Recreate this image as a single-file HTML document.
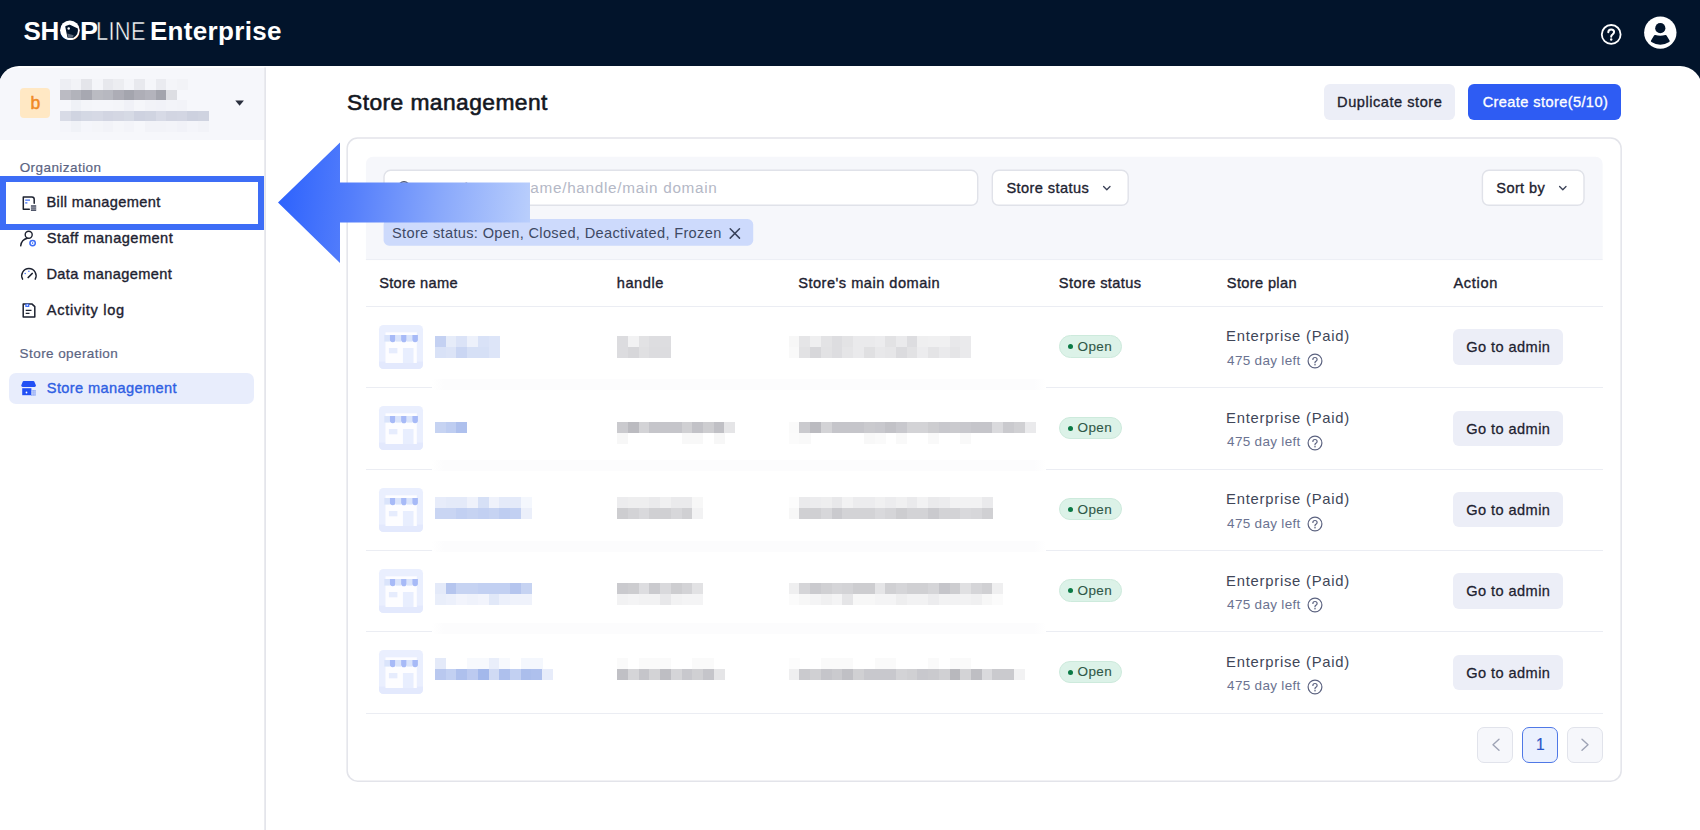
<!DOCTYPE html>
<html lang="en">
<head>
<meta charset="utf-8">
<title>Store management</title>
<style>
*{box-sizing:border-box;margin:0;padding:0}
html,body{width:1700px;height:830px;overflow:hidden}
body{background:#02142b;font-family:"Liberation Sans",sans-serif;color:#1d2230;position:relative}
.a{position:absolute}
.t{position:absolute;white-space:nowrap;line-height:1}
svg{position:absolute;overflow:visible}
.btn{position:absolute;background:#eceef7;border-radius:6px}
.inp{position:absolute;background:#fff;border:1px solid #dfe1ea;border-radius:7px}
.hl{position:absolute;height:1px;background:#ebedf3}
.badge{position:absolute;left:1058.5px;width:63px;height:22.6px;border-radius:12px;background:#dcf2e8;border:1px solid #cdeadc}
.dot{position:absolute;left:1068.2px;width:5px;height:5px;border-radius:50%;background:#0a7a45}
.pg{position:absolute;top:727px;width:36px;height:36px;border-radius:7px;background:#f6f7fb;border:1px solid #e1e3eb}
</style>
</head>
<body>
<!-- app shell -->
<div class="a" id="shell" style="left:-1px;top:66px;width:1703px;height:764px;background:#fff;border-radius:20px 22px 0 0"></div>
<div class="a" id="org" style="left:-1px;top:68px;width:265px;height:72px;background:#f6f7fb;border-radius:18px 0 0 0"></div>
<svg id="sideborder" style="left:260px;top:66px" width="10" height="764" viewBox="260 66 10 764"><rect x="264.300" y="67.500" width="1.600" height="763" fill="#e2e3e9"/></svg>
<div class="a" id="avatar" style="left:20px;top:88px;width:30px;height:30px;border-radius:4px;background:#ffe8c4"></div>
<svg id="caret" style="left:234.5px;top:100px" width="10" height="7" viewBox="0 0 10 7"><path d="M0.3 0.5h8.6L4.6 5.8z" fill="#2a2f3d"/></svg>

<!-- top bar icons -->
<svg id="help" style="left:1600px;top:23px" width="22" height="22" viewBox="0 0 22 22"><circle cx="11.200" cy="11.400" r="9.400" fill="none" stroke="#fff" stroke-width="1.800"/><path d="M8.300 9.300c0-1.700 1.300-2.800 2.900-2.800s2.900 1.100 2.900 2.600c0 1.300-.8 1.900-1.700 2.500-.8.500-1.200 1-1.200 1.900v.3" fill="none" stroke="#fff" stroke-width="2" stroke-linecap="round"/><circle cx="11.200" cy="16.500" r="1.200" fill="#fff"/></svg>
<svg id="user" style="left:1644px;top:16px" width="33" height="34" viewBox="1644 16 33 34"><circle cx="1660.300" cy="32.600" r="16.200" fill="#fff"/><circle cx="1660.300" cy="28.200" r="5.100" fill="#02142b"/><path d="M1655 36q5.300 1.700 10.600 0l3 5q-8.300 5.200-16.600 0z" fill="#02142b" stroke="#02142b" stroke-width="2.200" stroke-linejoin="round"/></svg>

<!-- sidebar -->
<div class="a" id="activebg" style="left:8.8px;top:373px;width:245px;height:31px;border-radius:7px;background:#e8edfc"></div>
<svg id="ic1" style="left:21px;top:195px" width="17" height="17" viewBox="0 0 17 17"><path d="M13.200 8.300V4.200a2.300 2.300 0 0 0-2.300-2.300H2.300v12.300h6" fill="none" stroke="#1d2230" stroke-width="1.500" stroke-linejoin="round" stroke-linecap="round"/><path d="M4.200 5.100h4.800M4.200 7.800h2.200" stroke="#3d6df6" stroke-width="1.300"/><rect x="9.900" y="10.200" width="5.300" height="5.800" fill="#50566a"/><path d="M9.900 12.100h5.300M9.900 14.100h5.300" stroke="#fff" stroke-width="0.500"/></svg>
<svg id="ic2" style="left:19px;top:229px" width="19" height="19" viewBox="0 0 19 19"><circle cx="9.700" cy="5.800" r="3.500" fill="none" stroke="#1d2230" stroke-width="1.400"/><path d="M1.700 16.800c.5-4 3-6.700 6.600-7.500" fill="none" stroke="#1d2230" stroke-width="1.400" stroke-linecap="round"/><circle cx="13.600" cy="14.100" r="2.700" fill="#fff" stroke="#3d6df6" stroke-width="1.500"/><circle cx="13.600" cy="14.100" r="0.800" fill="#3d6df6"/></svg>
<svg id="ic3" style="left:20px;top:266px" width="18" height="16" viewBox="0 0 18 16"><path d="M2.600 13.200a7.200 7.200 0 1 1 12.600 0" fill="none" stroke="#1d2230" stroke-width="1.400" stroke-linecap="round"/><path d="M8.200 11.500l4-4" stroke="#1d2230" stroke-width="1.700" stroke-linecap="round"/><circle cx="5.200" cy="7.600" r="0.750" fill="#3d6df6"/><circle cx="8.900" cy="5.200" r="0.750" fill="#3d6df6"/></svg>
<svg id="ic4" style="left:21px;top:302px" width="16" height="17" viewBox="0 0 16 17"><path d="M2.200 2.100h8.900l2.700 2.500v10.300H2.200z" fill="none" stroke="#1d2230" stroke-width="1.500" stroke-linejoin="round"/><path d="M4.300 1.700h4v3.300h-4z" fill="#3d6df6"/><path d="M5.600 2.500h1.400v1.300h-1.400z" fill="#fff"/><path d="M4.700 8.400h5.800M4.700 11.400h3.800" stroke="#1d2230" stroke-width="1.400"/></svg>
<svg id="ic5" style="left:21px;top:380px" width="16" height="17" viewBox="0 0 16 17"><path d="M2.700 0.900h9.700a1 1 0 0 1 .9.500l1.400 3.300a1.500 1.500 0 0 1-1.400 2.300H1.900A1.500 1.500 0 0 1 .5 4.700l1.300-3.300a1 1 0 0 1 .9-.5z" fill="#2250f4"/><path d="M1.200 8.200h9.200v7H1.200z" fill="#2250f4"/><circle cx="5.500" cy="12.500" r="0.900" fill="#fff"/><path d="M10 10h4.700v5.700H10z" fill="#8fa8f6"/><path d="M10 11.900h4.700M10 13.800h4.700M11.600 10v5.700M13.200 10v5.700" stroke="#e8edfc" stroke-width="0.350"/></svg>
<div class="a" id="highlight" style="left:0;top:176px;width:264px;height:54px;border:6px solid #3d6df6"></div>

<!-- header buttons -->
<div class="btn" style="left:1324px;top:84px;width:131px;height:35.800px"></div>
<div class="btn" style="left:1468.400px;top:84px;width:152.800px;height:35.800px;background:#2e5cf3"></div>

<!-- card -->
<svg id="chrome" style="left:0;top:0" width="1700" height="830" viewBox="0 0 1700 830">
<rect x="347.150" y="138.050" width="1274" height="643.100" rx="10.500" fill="#fff" stroke="#e3e4ea" stroke-width="1.500"/>
<path d="M365.900 260V163.800a7 7 0 0 1 7-7H1595.600a7 7 0 0 1 7 7V260z" fill="#f6f7fb"/>
<path d="M365.900 259.600H1602.600" stroke="#eceef4" stroke-width="1"/>
<g fill="#fff" stroke="#e0e2e9" stroke-width="1.400">
<rect x="384" y="170.300" width="593.700" height="35" rx="6.500"/>
<rect x="992.300" y="170.300" width="135.900" height="35" rx="6.500"/>
<rect x="1482.400" y="170.300" width="101.600" height="35" rx="6.500"/>
</g>
</svg>
<svg id="sicon" style="left:397px;top:180px" width="16" height="16" viewBox="0 0 16 16"><circle cx="7" cy="7" r="5.300" fill="none" stroke="#4a5066" stroke-width="1.500"/><path d="M11 11l3.500 3.500" stroke="#4a5066" stroke-width="1.500" stroke-linecap="round"/></svg>
<svg style="left:1101.500px;top:184.500px" width="10" height="7" viewBox="0 0 10 7"><path d="M1.600 1.500l3.200 3.300 3.200-3.300" fill="none" stroke="#3a4056" stroke-width="1.300" stroke-linecap="round" stroke-linejoin="round"/></svg>
<svg style="left:1558.300px;top:184.500px" width="10" height="7" viewBox="0 0 10 7"><path d="M1.600 1.500l3.200 3.300 3.200-3.300" fill="none" stroke="#3a4056" stroke-width="1.300" stroke-linecap="round" stroke-linejoin="round"/></svg>
<svg id="tagbg" style="left:380px;top:215px" width="380" height="36" viewBox="380 215 380 36"><rect x="383.600" y="219.100" width="369.600" height="26.600" rx="5.500" fill="#cddafc"/></svg>
<svg id="tagx" style="left:729px;top:227.500px" width="12" height="11" viewBox="0 0 12 11"><path d="M1.200 0.800l9.300 9.300M10.500 0.800L1.200 10.100" stroke="#39435c" stroke-width="1.500" stroke-linecap="round"/></svg>

<!-- table lines -->
<div class="hl" style="left:366px;top:305.700px;width:1237px"></div>
<div class="hl" style="left:366px;top:387.1px;width:66px"></div>
<div class="hl" style="left:1046px;top:387.1px;width:557px"></div>
<div class="a" style="left:432px;top:378.6px;width:614px;height:11px;background:linear-gradient(90deg,rgba(252,252,253,0),#fcfcfd 12px,#fcfcfd 602px,rgba(252,252,253,0))"></div>
<svg style="left:379.4px;top:324.7px" width="44" height="44" viewBox="0 0 44 44"><rect width="44" height="44" rx="4.500" fill="#eaeffe"/><path d="M0 36.500h44v3a4.500 4.500 0 0 1-4.500 4.500h-35A4.500 4.500 0 0 1 0 39.500z" fill="#e3e9fd"/><rect x="6.500" y="7.300" width="31.300" height="30.700" fill="#fdfdff"/><rect x="9.900" y="23" width="8.500" height="5.300" fill="#e6ecfd"/><rect x="23.900" y="23" width="10.600" height="15" fill="#e8eefe"/><g><rect x="5.300" y="10" width="5.600" height="6.600" fill="#dae4fb"/><path d="M10.900 10h5.600v4.400a2.800 2.800 0 0 1-5.600 0z" fill="#a7baf7"/><rect x="16.500" y="10" width="5.600" height="6.600" fill="#dae4fb"/><path d="M22.100 10h5.600v4.400a2.800 2.800 0 0 1-5.600 0z" fill="#a7baf7"/><rect x="27.700" y="10" width="5.600" height="6.600" fill="#dae4fb"/><path d="M33.300 10h5.600v4.400a2.800 2.800 0 0 1-5.600 0z" fill="#a7baf7"/></g></svg>
<div class="badge" style="top:335.1px"></div>
<div class="dot" style="top:344.1px"></div>
<svg style="left:1306.6px;top:353.1px" width="16" height="16" viewBox="0 0 16 16"><circle cx="8" cy="8" r="6.900" fill="none" stroke="#5c6380" stroke-width="1.200"/><path d="M5.900 6.500c0-1.200 1-2 2.100-2s2.100.8 2.100 1.900c0 .9-.6 1.400-1.200 1.800-.6.400-.9.700-.9 1.400v.2" fill="none" stroke="#5c6380" stroke-width="1.200" stroke-linecap="round"/><circle cx="8" cy="11.700" r="0.800" fill="#5c6380"/></svg>
<div class="btn" style="left:1453.400px;top:329.2px;width:110px;height:35.400px"></div>
<div class="hl" style="left:366px;top:468.5px;width:66px"></div>
<div class="hl" style="left:1046px;top:468.5px;width:557px"></div>
<div class="a" style="left:432px;top:460.0px;width:614px;height:11px;background:linear-gradient(90deg,rgba(252,252,253,0),#fcfcfd 12px,#fcfcfd 602px,rgba(252,252,253,0))"></div>
<svg style="left:379.4px;top:406.1px" width="44" height="44" viewBox="0 0 44 44"><rect width="44" height="44" rx="4.500" fill="#eaeffe"/><path d="M0 36.500h44v3a4.500 4.500 0 0 1-4.500 4.500h-35A4.500 4.500 0 0 1 0 39.500z" fill="#e3e9fd"/><rect x="6.500" y="7.300" width="31.300" height="30.700" fill="#fdfdff"/><rect x="9.900" y="23" width="8.500" height="5.300" fill="#e6ecfd"/><rect x="23.900" y="23" width="10.600" height="15" fill="#e8eefe"/><g><rect x="5.300" y="10" width="5.600" height="6.600" fill="#dae4fb"/><path d="M10.900 10h5.600v4.400a2.800 2.800 0 0 1-5.600 0z" fill="#a7baf7"/><rect x="16.500" y="10" width="5.600" height="6.600" fill="#dae4fb"/><path d="M22.100 10h5.600v4.400a2.800 2.800 0 0 1-5.600 0z" fill="#a7baf7"/><rect x="27.700" y="10" width="5.600" height="6.600" fill="#dae4fb"/><path d="M33.300 10h5.600v4.400a2.800 2.800 0 0 1-5.600 0z" fill="#a7baf7"/></g></svg>
<div class="badge" style="top:416.5px"></div>
<div class="dot" style="top:425.5px"></div>
<svg style="left:1306.6px;top:434.5px" width="16" height="16" viewBox="0 0 16 16"><circle cx="8" cy="8" r="6.900" fill="none" stroke="#5c6380" stroke-width="1.200"/><path d="M5.900 6.500c0-1.200 1-2 2.100-2s2.100.8 2.100 1.900c0 .9-.6 1.400-1.200 1.800-.6.400-.9.700-.9 1.400v.2" fill="none" stroke="#5c6380" stroke-width="1.200" stroke-linecap="round"/><circle cx="8" cy="11.700" r="0.800" fill="#5c6380"/></svg>
<div class="btn" style="left:1453.400px;top:410.6px;width:110px;height:35.400px"></div>
<div class="hl" style="left:366px;top:549.9px;width:66px"></div>
<div class="hl" style="left:1046px;top:549.9px;width:557px"></div>
<div class="a" style="left:432px;top:541.4px;width:614px;height:11px;background:linear-gradient(90deg,rgba(252,252,253,0),#fcfcfd 12px,#fcfcfd 602px,rgba(252,252,253,0))"></div>
<svg style="left:379.4px;top:487.5px" width="44" height="44" viewBox="0 0 44 44"><rect width="44" height="44" rx="4.500" fill="#eaeffe"/><path d="M0 36.500h44v3a4.500 4.500 0 0 1-4.500 4.500h-35A4.500 4.500 0 0 1 0 39.500z" fill="#e3e9fd"/><rect x="6.500" y="7.300" width="31.300" height="30.700" fill="#fdfdff"/><rect x="9.900" y="23" width="8.500" height="5.300" fill="#e6ecfd"/><rect x="23.900" y="23" width="10.600" height="15" fill="#e8eefe"/><g><rect x="5.300" y="10" width="5.600" height="6.600" fill="#dae4fb"/><path d="M10.900 10h5.600v4.400a2.800 2.800 0 0 1-5.600 0z" fill="#a7baf7"/><rect x="16.500" y="10" width="5.600" height="6.600" fill="#dae4fb"/><path d="M22.100 10h5.600v4.400a2.800 2.800 0 0 1-5.600 0z" fill="#a7baf7"/><rect x="27.700" y="10" width="5.600" height="6.600" fill="#dae4fb"/><path d="M33.300 10h5.600v4.400a2.800 2.800 0 0 1-5.600 0z" fill="#a7baf7"/></g></svg>
<div class="badge" style="top:497.9px"></div>
<div class="dot" style="top:506.9px"></div>
<svg style="left:1306.6px;top:515.9px" width="16" height="16" viewBox="0 0 16 16"><circle cx="8" cy="8" r="6.900" fill="none" stroke="#5c6380" stroke-width="1.200"/><path d="M5.900 6.500c0-1.200 1-2 2.100-2s2.100.8 2.100 1.900c0 .9-.6 1.400-1.200 1.800-.6.400-.9.700-.9 1.400v.2" fill="none" stroke="#5c6380" stroke-width="1.200" stroke-linecap="round"/><circle cx="8" cy="11.700" r="0.800" fill="#5c6380"/></svg>
<div class="btn" style="left:1453.400px;top:492.0px;width:110px;height:35.400px"></div>
<div class="hl" style="left:366px;top:631.3px;width:66px"></div>
<div class="hl" style="left:1046px;top:631.3px;width:557px"></div>
<div class="a" style="left:432px;top:622.8px;width:614px;height:11px;background:linear-gradient(90deg,rgba(252,252,253,0),#fcfcfd 12px,#fcfcfd 602px,rgba(252,252,253,0))"></div>
<svg style="left:379.4px;top:568.9px" width="44" height="44" viewBox="0 0 44 44"><rect width="44" height="44" rx="4.500" fill="#eaeffe"/><path d="M0 36.500h44v3a4.500 4.500 0 0 1-4.500 4.500h-35A4.500 4.500 0 0 1 0 39.500z" fill="#e3e9fd"/><rect x="6.500" y="7.300" width="31.300" height="30.700" fill="#fdfdff"/><rect x="9.900" y="23" width="8.500" height="5.300" fill="#e6ecfd"/><rect x="23.900" y="23" width="10.600" height="15" fill="#e8eefe"/><g><rect x="5.300" y="10" width="5.600" height="6.600" fill="#dae4fb"/><path d="M10.900 10h5.600v4.400a2.800 2.800 0 0 1-5.600 0z" fill="#a7baf7"/><rect x="16.500" y="10" width="5.600" height="6.600" fill="#dae4fb"/><path d="M22.100 10h5.600v4.400a2.800 2.800 0 0 1-5.600 0z" fill="#a7baf7"/><rect x="27.700" y="10" width="5.600" height="6.600" fill="#dae4fb"/><path d="M33.300 10h5.600v4.400a2.800 2.800 0 0 1-5.600 0z" fill="#a7baf7"/></g></svg>
<div class="badge" style="top:579.3px"></div>
<div class="dot" style="top:588.3px"></div>
<svg style="left:1306.6px;top:597.3px" width="16" height="16" viewBox="0 0 16 16"><circle cx="8" cy="8" r="6.900" fill="none" stroke="#5c6380" stroke-width="1.200"/><path d="M5.900 6.500c0-1.200 1-2 2.100-2s2.100.8 2.100 1.900c0 .9-.6 1.400-1.200 1.800-.6.400-.9.700-.9 1.400v.2" fill="none" stroke="#5c6380" stroke-width="1.200" stroke-linecap="round"/><circle cx="8" cy="11.700" r="0.800" fill="#5c6380"/></svg>
<div class="btn" style="left:1453.400px;top:573.4px;width:110px;height:35.400px"></div>
<div class="hl" style="left:366px;top:712.7px;width:1237px"></div>
<svg style="left:379.4px;top:650.3px" width="44" height="44" viewBox="0 0 44 44"><rect width="44" height="44" rx="4.500" fill="#eaeffe"/><path d="M0 36.500h44v3a4.500 4.500 0 0 1-4.500 4.500h-35A4.500 4.500 0 0 1 0 39.500z" fill="#e3e9fd"/><rect x="6.500" y="7.300" width="31.300" height="30.700" fill="#fdfdff"/><rect x="9.900" y="23" width="8.500" height="5.300" fill="#e6ecfd"/><rect x="23.900" y="23" width="10.600" height="15" fill="#e8eefe"/><g><rect x="5.300" y="10" width="5.600" height="6.600" fill="#dae4fb"/><path d="M10.900 10h5.600v4.400a2.800 2.800 0 0 1-5.600 0z" fill="#a7baf7"/><rect x="16.500" y="10" width="5.600" height="6.600" fill="#dae4fb"/><path d="M22.100 10h5.600v4.400a2.800 2.800 0 0 1-5.600 0z" fill="#a7baf7"/><rect x="27.700" y="10" width="5.600" height="6.600" fill="#dae4fb"/><path d="M33.300 10h5.600v4.400a2.800 2.800 0 0 1-5.600 0z" fill="#a7baf7"/></g></svg>
<div class="badge" style="top:660.7px"></div>
<div class="dot" style="top:669.7px"></div>
<svg style="left:1306.6px;top:678.7px" width="16" height="16" viewBox="0 0 16 16"><circle cx="8" cy="8" r="6.900" fill="none" stroke="#5c6380" stroke-width="1.200"/><path d="M5.900 6.500c0-1.200 1-2 2.100-2s2.100.8 2.100 1.900c0 .9-.6 1.400-1.200 1.800-.6.400-.9.700-.9 1.400v.2" fill="none" stroke="#5c6380" stroke-width="1.200" stroke-linecap="round"/><circle cx="8" cy="11.700" r="0.800" fill="#5c6380"/></svg>
<div class="btn" style="left:1453.400px;top:654.8px;width:110px;height:35.400px"></div>

<!-- pagination -->
<div class="pg" style="left:1477.200px"></div>
<div class="pg" style="left:1521.800px;background:#ebf1fe;border:1.500px solid #4f78e6"></div>
<div class="pg" style="left:1566.600px"></div>
<svg style="left:1490.500px;top:738px" width="10" height="14" viewBox="0 0 10 14"><path d="M8 1.300L2 6.800l6 5.500" fill="none" stroke="#9ea3b5" stroke-width="1.400" stroke-linecap="round" stroke-linejoin="round"/></svg>
<svg style="left:1580px;top:738px" width="10" height="14" viewBox="0 0 10 14"><path d="M2 1.300l6 5.500-6 5.500" fill="none" stroke="#9ea3b5" stroke-width="1.400" stroke-linecap="round" stroke-linejoin="round"/></svg>

<svg id="mosaic" style="left:0;top:0" width="1700" height="830" viewBox="0 0 1700 830" shape-rendering="crispEdges"><rect x="435.00" y="336.40" width="11.02" height="11.02" fill="#c4d1f2"/><rect x="445.72" y="336.40" width="11.02" height="11.02" fill="#e6ecf9"/><rect x="456.44" y="336.40" width="11.02" height="11.02" fill="#dbe3f7"/><rect x="467.16" y="336.40" width="11.02" height="11.02" fill="#edf1fb"/><rect x="477.88" y="336.40" width="11.02" height="11.02" fill="#d9e2f7"/><rect x="488.60" y="336.40" width="11.02" height="11.02" fill="#dde5f8"/><rect x="435.00" y="347.12" width="11.02" height="11.02" fill="#d9e2f7"/><rect x="445.72" y="347.12" width="11.02" height="11.02" fill="#dce4f7"/><rect x="456.44" y="347.12" width="11.02" height="11.02" fill="#cad6f3"/><rect x="467.16" y="347.12" width="11.02" height="11.02" fill="#d6e0f6"/><rect x="477.88" y="347.12" width="11.02" height="11.02" fill="#d6e0f6"/><rect x="488.60" y="347.12" width="11.02" height="11.02" fill="#dde5f8"/><rect x="617.24" y="336.40" width="11.02" height="11.02" fill="#dcdcdf"/><rect x="627.96" y="336.40" width="11.02" height="11.02" fill="#f2f2f3"/><rect x="638.68" y="336.40" width="11.02" height="11.02" fill="#e2e2e4"/><rect x="649.40" y="336.40" width="11.02" height="11.02" fill="#dddde0"/><rect x="660.12" y="336.40" width="11.02" height="11.02" fill="#dddde0"/><rect x="617.24" y="347.12" width="11.02" height="11.02" fill="#dcdcdf"/><rect x="627.96" y="347.12" width="11.02" height="11.02" fill="#d7d7da"/><rect x="638.68" y="347.12" width="11.02" height="11.02" fill="#e0e0e2"/><rect x="649.40" y="347.12" width="11.02" height="11.02" fill="#dcdcdf"/><rect x="660.12" y="347.12" width="11.02" height="11.02" fill="#dcdcdf"/><rect x="788.76" y="336.40" width="11.02" height="11.02" fill="#f7f7f7"/><rect x="799.48" y="336.40" width="11.02" height="11.02" fill="#e5e5e7"/><rect x="810.20" y="336.40" width="11.02" height="11.02" fill="#efeff0"/><rect x="820.92" y="336.40" width="11.02" height="11.02" fill="#e3e3e5"/><rect x="831.64" y="336.40" width="11.02" height="11.02" fill="#dddde0"/><rect x="842.36" y="336.40" width="11.02" height="11.02" fill="#e3e3e5"/><rect x="853.08" y="336.40" width="11.02" height="11.02" fill="#eaeaec"/><rect x="863.80" y="336.40" width="11.02" height="11.02" fill="#eaeaec"/><rect x="874.52" y="336.40" width="11.02" height="11.02" fill="#ececee"/><rect x="885.24" y="336.40" width="11.02" height="11.02" fill="#e2e2e4"/><rect x="895.96" y="336.40" width="11.02" height="11.02" fill="#eaeaec"/><rect x="906.68" y="336.40" width="11.02" height="11.02" fill="#dddde0"/><rect x="917.40" y="336.40" width="11.02" height="11.02" fill="#efeff0"/><rect x="928.12" y="336.40" width="11.02" height="11.02" fill="#f0f0f1"/><rect x="938.84" y="336.40" width="11.02" height="11.02" fill="#f0f0f1"/><rect x="949.56" y="336.40" width="11.02" height="11.02" fill="#e8e8ea"/><rect x="960.28" y="336.40" width="11.02" height="11.02" fill="#eaeaec"/><rect x="788.76" y="347.12" width="11.02" height="11.02" fill="#f9f9f9"/><rect x="799.48" y="347.12" width="11.02" height="11.02" fill="#e2e2e4"/><rect x="810.20" y="347.12" width="11.02" height="11.02" fill="#d7d7da"/><rect x="820.92" y="347.12" width="11.02" height="11.02" fill="#e2e2e4"/><rect x="831.64" y="347.12" width="11.02" height="11.02" fill="#dddde0"/><rect x="842.36" y="347.12" width="11.02" height="11.02" fill="#e5e5e7"/><rect x="853.08" y="347.12" width="11.02" height="11.02" fill="#eaeaec"/><rect x="863.80" y="347.12" width="11.02" height="11.02" fill="#e0e0e2"/><rect x="874.52" y="347.12" width="11.02" height="11.02" fill="#e8e8ea"/><rect x="885.24" y="347.12" width="11.02" height="11.02" fill="#e6e6e8"/><rect x="895.96" y="347.12" width="11.02" height="11.02" fill="#dbdbde"/><rect x="906.68" y="347.12" width="11.02" height="11.02" fill="#e2e2e4"/><rect x="917.40" y="347.12" width="11.02" height="11.02" fill="#ececee"/><rect x="928.12" y="347.12" width="11.02" height="11.02" fill="#e4e4e6"/><rect x="938.84" y="347.12" width="11.02" height="11.02" fill="#eaeaec"/><rect x="949.56" y="347.12" width="11.02" height="11.02" fill="#e5e5e7"/><rect x="960.28" y="347.12" width="11.02" height="11.02" fill="#eaeaec"/><rect x="435.00" y="422.16" width="11.02" height="11.02" fill="#c6d3f2"/><rect x="445.72" y="422.16" width="11.02" height="11.02" fill="#becdf1"/><rect x="456.44" y="422.16" width="11.02" height="11.02" fill="#aec0ed"/><rect x="617.24" y="422.16" width="11.02" height="11.02" fill="#cacace"/><rect x="627.96" y="422.16" width="11.02" height="11.02" fill="#bbbbc0"/><rect x="638.68" y="422.16" width="11.02" height="11.02" fill="#d3d3d6"/><rect x="649.40" y="422.16" width="11.02" height="11.02" fill="#c5c5ca"/><rect x="660.12" y="422.16" width="11.02" height="11.02" fill="#c5c5ca"/><rect x="670.84" y="422.16" width="11.02" height="11.02" fill="#c5c5ca"/><rect x="681.56" y="422.16" width="11.02" height="11.02" fill="#d0d0d3"/><rect x="692.28" y="422.16" width="11.02" height="11.02" fill="#c2c2c7"/><rect x="703.00" y="422.16" width="11.02" height="11.02" fill="#cdcdd0"/><rect x="713.72" y="422.16" width="11.02" height="11.02" fill="#c0c0c5"/><rect x="724.44" y="422.16" width="11.02" height="11.02" fill="#e5e5e7"/><rect x="617.24" y="432.88" width="11.02" height="11.02" fill="#f7f7f7"/><rect x="681.56" y="432.88" width="11.02" height="11.02" fill="#f8f8f8"/><rect x="692.28" y="432.88" width="11.02" height="11.02" fill="#f8f8f8"/><rect x="713.72" y="432.88" width="11.02" height="11.02" fill="#f7f7f7"/><rect x="788.76" y="422.16" width="11.02" height="11.02" fill="#fafafa"/><rect x="799.48" y="422.16" width="11.02" height="11.02" fill="#cacace"/><rect x="810.20" y="422.16" width="11.02" height="11.02" fill="#bbbbc0"/><rect x="820.92" y="422.16" width="11.02" height="11.02" fill="#d3d3d6"/><rect x="831.64" y="422.16" width="11.02" height="11.02" fill="#c5c5ca"/><rect x="842.36" y="422.16" width="11.02" height="11.02" fill="#c5c5ca"/><rect x="853.08" y="422.16" width="11.02" height="11.02" fill="#c5c5ca"/><rect x="863.80" y="422.16" width="11.02" height="11.02" fill="#cacace"/><rect x="874.52" y="422.16" width="11.02" height="11.02" fill="#c8c8cd"/><rect x="885.24" y="422.16" width="11.02" height="11.02" fill="#c2c2c7"/><rect x="895.96" y="422.16" width="11.02" height="11.02" fill="#c8c8cd"/><rect x="906.68" y="422.16" width="11.02" height="11.02" fill="#d3d3d6"/><rect x="917.40" y="422.16" width="11.02" height="11.02" fill="#d3d3d6"/><rect x="928.12" y="422.16" width="11.02" height="11.02" fill="#cdcdd0"/><rect x="938.84" y="422.16" width="11.02" height="11.02" fill="#c8c8cd"/><rect x="949.56" y="422.16" width="11.02" height="11.02" fill="#cacace"/><rect x="960.28" y="422.16" width="11.02" height="11.02" fill="#c8c8cd"/><rect x="971.00" y="422.16" width="11.02" height="11.02" fill="#c5c5ca"/><rect x="981.72" y="422.16" width="11.02" height="11.02" fill="#c5c5ca"/><rect x="992.44" y="422.16" width="11.02" height="11.02" fill="#dadadd"/><rect x="1003.16" y="422.16" width="11.02" height="11.02" fill="#cacace"/><rect x="1013.88" y="422.16" width="11.02" height="11.02" fill="#d0d0d3"/><rect x="1024.60" y="422.16" width="11.02" height="11.02" fill="#eaeaec"/><rect x="788.76" y="432.88" width="11.02" height="11.02" fill="#fbfbfb"/><rect x="799.48" y="432.88" width="11.02" height="11.02" fill="#f9f9f9"/><rect x="863.80" y="432.88" width="11.02" height="11.02" fill="#f8f8f8"/><rect x="874.52" y="432.88" width="11.02" height="11.02" fill="#fafafa"/><rect x="895.96" y="432.88" width="11.02" height="11.02" fill="#f9f9f9"/><rect x="928.12" y="432.88" width="11.02" height="11.02" fill="#f9f9f9"/><rect x="960.28" y="432.88" width="11.02" height="11.02" fill="#f9f9f9"/><rect x="435.00" y="497.20" width="11.02" height="11.02" fill="#e7ecfa"/><rect x="445.72" y="497.20" width="11.02" height="11.02" fill="#e4eaf9"/><rect x="456.44" y="497.20" width="11.02" height="11.02" fill="#e4eaf9"/><rect x="467.16" y="497.20" width="11.02" height="11.02" fill="#eff2fb"/><rect x="477.88" y="497.20" width="11.02" height="11.02" fill="#d6e0f6"/><rect x="488.60" y="497.20" width="11.02" height="11.02" fill="#eff2fb"/><rect x="499.32" y="497.20" width="11.02" height="11.02" fill="#e4eaf9"/><rect x="510.04" y="497.20" width="11.02" height="11.02" fill="#e4eaf9"/><rect x="520.76" y="497.20" width="11.02" height="11.02" fill="#f4f7fd"/><rect x="435.00" y="507.92" width="11.02" height="11.02" fill="#c9d5f3"/><rect x="445.72" y="507.92" width="11.02" height="11.02" fill="#c9d5f3"/><rect x="456.44" y="507.92" width="11.02" height="11.02" fill="#c2d0f2"/><rect x="467.16" y="507.92" width="11.02" height="11.02" fill="#c6d3f2"/><rect x="477.88" y="507.92" width="11.02" height="11.02" fill="#c2d0f2"/><rect x="488.60" y="507.92" width="11.02" height="11.02" fill="#c6d3f2"/><rect x="499.32" y="507.92" width="11.02" height="11.02" fill="#becdf1"/><rect x="510.04" y="507.92" width="11.02" height="11.02" fill="#c2d0f2"/><rect x="520.76" y="507.92" width="11.02" height="11.02" fill="#ebeffa"/><rect x="617.24" y="497.20" width="11.02" height="11.02" fill="#ececee"/><rect x="627.96" y="497.20" width="11.02" height="11.02" fill="#eeeeef"/><rect x="638.68" y="497.20" width="11.02" height="11.02" fill="#eeeeef"/><rect x="649.40" y="497.20" width="11.02" height="11.02" fill="#eaeaec"/><rect x="660.12" y="497.20" width="11.02" height="11.02" fill="#f0f0f1"/><rect x="670.84" y="497.20" width="11.02" height="11.02" fill="#eaeaec"/><rect x="681.56" y="497.20" width="11.02" height="11.02" fill="#eaeaec"/><rect x="692.28" y="497.20" width="11.02" height="11.02" fill="#f7f7f7"/><rect x="617.24" y="507.92" width="11.02" height="11.02" fill="#cdcdd0"/><rect x="627.96" y="507.92" width="11.02" height="11.02" fill="#d3d3d6"/><rect x="638.68" y="507.92" width="11.02" height="11.02" fill="#d9d9dc"/><rect x="649.40" y="507.92" width="11.02" height="11.02" fill="#d0d0d3"/><rect x="660.12" y="507.92" width="11.02" height="11.02" fill="#d0d0d3"/><rect x="670.84" y="507.92" width="11.02" height="11.02" fill="#d7d7da"/><rect x="681.56" y="507.92" width="11.02" height="11.02" fill="#d0d0d3"/><rect x="692.28" y="507.92" width="11.02" height="11.02" fill="#f2f2f3"/><rect x="788.76" y="497.20" width="11.02" height="11.02" fill="#fcfcfc"/><rect x="799.48" y="497.20" width="11.02" height="11.02" fill="#eaeaec"/><rect x="810.20" y="497.20" width="11.02" height="11.02" fill="#ececee"/><rect x="820.92" y="497.20" width="11.02" height="11.02" fill="#eeeeef"/><rect x="831.64" y="497.20" width="11.02" height="11.02" fill="#e8e8ea"/><rect x="842.36" y="497.20" width="11.02" height="11.02" fill="#f2f2f3"/><rect x="853.08" y="497.20" width="11.02" height="11.02" fill="#ececee"/><rect x="863.80" y="497.20" width="11.02" height="11.02" fill="#ececee"/><rect x="874.52" y="497.20" width="11.02" height="11.02" fill="#f0f0f1"/><rect x="885.24" y="497.20" width="11.02" height="11.02" fill="#ececee"/><rect x="895.96" y="497.20" width="11.02" height="11.02" fill="#f0f0f1"/><rect x="906.68" y="497.20" width="11.02" height="11.02" fill="#eaeaec"/><rect x="917.40" y="497.20" width="11.02" height="11.02" fill="#f2f2f3"/><rect x="928.12" y="497.20" width="11.02" height="11.02" fill="#eaeaec"/><rect x="938.84" y="497.20" width="11.02" height="11.02" fill="#ececee"/><rect x="949.56" y="497.20" width="11.02" height="11.02" fill="#f2f2f3"/><rect x="960.28" y="497.20" width="11.02" height="11.02" fill="#f2f2f3"/><rect x="971.00" y="497.20" width="11.02" height="11.02" fill="#f2f2f3"/><rect x="981.72" y="497.20" width="11.02" height="11.02" fill="#eaeaec"/><rect x="788.76" y="507.92" width="11.02" height="11.02" fill="#f7f7f7"/><rect x="799.48" y="507.92" width="11.02" height="11.02" fill="#d0d0d3"/><rect x="810.20" y="507.92" width="11.02" height="11.02" fill="#d0d0d3"/><rect x="820.92" y="507.92" width="11.02" height="11.02" fill="#d7d7da"/><rect x="831.64" y="507.92" width="11.02" height="11.02" fill="#cacace"/><rect x="842.36" y="507.92" width="11.02" height="11.02" fill="#d3d3d6"/><rect x="853.08" y="507.92" width="11.02" height="11.02" fill="#d3d3d6"/><rect x="863.80" y="507.92" width="11.02" height="11.02" fill="#d3d3d6"/><rect x="874.52" y="507.92" width="11.02" height="11.02" fill="#d9d9dc"/><rect x="885.24" y="507.92" width="11.02" height="11.02" fill="#d5d5d8"/><rect x="895.96" y="507.92" width="11.02" height="11.02" fill="#cdcdd0"/><rect x="906.68" y="507.92" width="11.02" height="11.02" fill="#d3d3d6"/><rect x="917.40" y="507.92" width="11.02" height="11.02" fill="#d3d3d6"/><rect x="928.12" y="507.92" width="11.02" height="11.02" fill="#cacace"/><rect x="938.84" y="507.92" width="11.02" height="11.02" fill="#d3d3d6"/><rect x="949.56" y="507.92" width="11.02" height="11.02" fill="#d3d3d6"/><rect x="960.28" y="507.92" width="11.02" height="11.02" fill="#d9d9dc"/><rect x="971.00" y="507.92" width="11.02" height="11.02" fill="#d7d7da"/><rect x="981.72" y="507.92" width="11.02" height="11.02" fill="#d0d0d3"/><rect x="435.00" y="582.96" width="11.02" height="11.02" fill="#e4eaf9"/><rect x="445.72" y="582.96" width="11.02" height="11.02" fill="#b5c5ee"/><rect x="456.44" y="582.96" width="11.02" height="11.02" fill="#c6d3f2"/><rect x="467.16" y="582.96" width="11.02" height="11.02" fill="#c6d3f2"/><rect x="477.88" y="582.96" width="11.02" height="11.02" fill="#c2d0f2"/><rect x="488.60" y="582.96" width="11.02" height="11.02" fill="#c2d0f2"/><rect x="499.32" y="582.96" width="11.02" height="11.02" fill="#c2d0f2"/><rect x="510.04" y="582.96" width="11.02" height="11.02" fill="#b5c5ee"/><rect x="520.76" y="582.96" width="11.02" height="11.02" fill="#c6d3f2"/><rect x="435.00" y="593.68" width="11.02" height="11.02" fill="#e9eefa"/><rect x="445.72" y="593.68" width="11.02" height="11.02" fill="#ecf0fb"/><rect x="456.44" y="593.68" width="11.02" height="11.02" fill="#f2f4fc"/><rect x="467.16" y="593.68" width="11.02" height="11.02" fill="#eff2fb"/><rect x="477.88" y="593.68" width="11.02" height="11.02" fill="#f2f4fc"/><rect x="488.60" y="593.68" width="11.02" height="11.02" fill="#e1e8f8"/><rect x="499.32" y="593.68" width="11.02" height="11.02" fill="#ecf0fb"/><rect x="510.04" y="593.68" width="11.02" height="11.02" fill="#eff2fb"/><rect x="520.76" y="593.68" width="11.02" height="11.02" fill="#eff2fb"/><rect x="617.24" y="582.96" width="11.02" height="11.02" fill="#cacace"/><rect x="627.96" y="582.96" width="11.02" height="11.02" fill="#cdcdd0"/><rect x="638.68" y="582.96" width="11.02" height="11.02" fill="#dddde0"/><rect x="649.40" y="582.96" width="11.02" height="11.02" fill="#cacace"/><rect x="660.12" y="582.96" width="11.02" height="11.02" fill="#d9d9dc"/><rect x="670.84" y="582.96" width="11.02" height="11.02" fill="#cdcdd0"/><rect x="681.56" y="582.96" width="11.02" height="11.02" fill="#d3d3d6"/><rect x="692.28" y="582.96" width="11.02" height="11.02" fill="#e2e2e4"/><rect x="617.24" y="593.68" width="11.02" height="11.02" fill="#f2f2f3"/><rect x="627.96" y="593.68" width="11.02" height="11.02" fill="#f4f4f5"/><rect x="638.68" y="593.68" width="11.02" height="11.02" fill="#f2f2f3"/><rect x="649.40" y="593.68" width="11.02" height="11.02" fill="#f2f2f3"/><rect x="660.12" y="593.68" width="11.02" height="11.02" fill="#e8e8ea"/><rect x="670.84" y="593.68" width="11.02" height="11.02" fill="#f2f2f3"/><rect x="681.56" y="593.68" width="11.02" height="11.02" fill="#f4f4f5"/><rect x="692.28" y="593.68" width="11.02" height="11.02" fill="#f4f4f5"/><rect x="788.76" y="582.96" width="11.02" height="11.02" fill="#efeff0"/><rect x="799.48" y="582.96" width="11.02" height="11.02" fill="#d5d5d8"/><rect x="810.20" y="582.96" width="11.02" height="11.02" fill="#cacace"/><rect x="820.92" y="582.96" width="11.02" height="11.02" fill="#d0d0d3"/><rect x="831.64" y="582.96" width="11.02" height="11.02" fill="#d5d5d8"/><rect x="842.36" y="582.96" width="11.02" height="11.02" fill="#d3d3d6"/><rect x="853.08" y="582.96" width="11.02" height="11.02" fill="#cdcdd0"/><rect x="863.80" y="582.96" width="11.02" height="11.02" fill="#cdcdd0"/><rect x="874.52" y="582.96" width="11.02" height="11.02" fill="#e5e5e7"/><rect x="885.24" y="582.96" width="11.02" height="11.02" fill="#d0d0d3"/><rect x="895.96" y="582.96" width="11.02" height="11.02" fill="#d5d5d8"/><rect x="906.68" y="582.96" width="11.02" height="11.02" fill="#d0d0d3"/><rect x="917.40" y="582.96" width="11.02" height="11.02" fill="#d0d0d3"/><rect x="928.12" y="582.96" width="11.02" height="11.02" fill="#d5d5d8"/><rect x="938.84" y="582.96" width="11.02" height="11.02" fill="#c5c5ca"/><rect x="949.56" y="582.96" width="11.02" height="11.02" fill="#cdcdd0"/><rect x="960.28" y="582.96" width="11.02" height="11.02" fill="#e0e0e2"/><rect x="971.00" y="582.96" width="11.02" height="11.02" fill="#d5d5d8"/><rect x="981.72" y="582.96" width="11.02" height="11.02" fill="#d0d0d3"/><rect x="992.44" y="582.96" width="11.02" height="11.02" fill="#efeff0"/><rect x="788.76" y="593.68" width="11.02" height="11.02" fill="#fbfbfb"/><rect x="799.48" y="593.68" width="11.02" height="11.02" fill="#f7f7f7"/><rect x="810.20" y="593.68" width="11.02" height="11.02" fill="#f4f4f5"/><rect x="820.92" y="593.68" width="11.02" height="11.02" fill="#f0f0f1"/><rect x="831.64" y="593.68" width="11.02" height="11.02" fill="#f4f4f5"/><rect x="842.36" y="593.68" width="11.02" height="11.02" fill="#e5e5e7"/><rect x="853.08" y="593.68" width="11.02" height="11.02" fill="#f7f7f7"/><rect x="863.80" y="593.68" width="11.02" height="11.02" fill="#f7f7f7"/><rect x="874.52" y="593.68" width="11.02" height="11.02" fill="#f4f4f5"/><rect x="885.24" y="593.68" width="11.02" height="11.02" fill="#f4f4f5"/><rect x="895.96" y="593.68" width="11.02" height="11.02" fill="#eeeeef"/><rect x="906.68" y="593.68" width="11.02" height="11.02" fill="#f2f2f3"/><rect x="917.40" y="593.68" width="11.02" height="11.02" fill="#f2f2f3"/><rect x="928.12" y="593.68" width="11.02" height="11.02" fill="#ececee"/><rect x="938.84" y="593.68" width="11.02" height="11.02" fill="#f2f2f3"/><rect x="949.56" y="593.68" width="11.02" height="11.02" fill="#f2f2f3"/><rect x="960.28" y="593.68" width="11.02" height="11.02" fill="#f2f2f3"/><rect x="971.00" y="593.68" width="11.02" height="11.02" fill="#f0f0f1"/><rect x="981.72" y="593.68" width="11.02" height="11.02" fill="#f7f7f7"/><rect x="992.44" y="593.68" width="11.02" height="11.02" fill="#fbfbfb"/><rect x="435.00" y="658.00" width="11.02" height="11.02" fill="#e4eaf9"/><rect x="467.16" y="658.00" width="11.02" height="11.02" fill="#f7f9fd"/><rect x="477.88" y="658.00" width="11.02" height="11.02" fill="#f7f9fd"/><rect x="488.60" y="658.00" width="11.02" height="11.02" fill="#e9eefa"/><rect x="499.32" y="658.00" width="11.02" height="11.02" fill="#f7f9fd"/><rect x="520.76" y="658.00" width="11.02" height="11.02" fill="#f4f7fd"/><rect x="531.48" y="658.00" width="11.02" height="11.02" fill="#f4f7fd"/><rect x="435.00" y="668.72" width="11.02" height="11.02" fill="#b9c8ef"/><rect x="445.72" y="668.72" width="11.02" height="11.02" fill="#c2d0f2"/><rect x="456.44" y="668.72" width="11.02" height="11.02" fill="#aec0ed"/><rect x="467.16" y="668.72" width="11.02" height="11.02" fill="#bccaf0"/><rect x="477.88" y="668.72" width="11.02" height="11.02" fill="#a3b8eb"/><rect x="488.60" y="668.72" width="11.02" height="11.02" fill="#d0daf4"/><rect x="499.32" y="668.72" width="11.02" height="11.02" fill="#aec0ed"/><rect x="510.04" y="668.72" width="11.02" height="11.02" fill="#c2d0f2"/><rect x="520.76" y="668.72" width="11.02" height="11.02" fill="#abbeec"/><rect x="531.48" y="668.72" width="11.02" height="11.02" fill="#aec0ed"/><rect x="542.20" y="668.72" width="11.02" height="11.02" fill="#e7ecfa"/><rect x="617.24" y="658.00" width="11.02" height="11.02" fill="#fafafa"/><rect x="638.68" y="658.00" width="11.02" height="11.02" fill="#fafafa"/><rect x="649.40" y="658.00" width="11.02" height="11.02" fill="#fafafa"/><rect x="660.12" y="658.00" width="11.02" height="11.02" fill="#fafafa"/><rect x="692.28" y="658.00" width="11.02" height="11.02" fill="#fafafa"/><rect x="703.00" y="658.00" width="11.02" height="11.02" fill="#fafafa"/><rect x="617.24" y="668.72" width="11.02" height="11.02" fill="#c0c0c5"/><rect x="627.96" y="668.72" width="11.02" height="11.02" fill="#d5d5d8"/><rect x="638.68" y="668.72" width="11.02" height="11.02" fill="#c5c5ca"/><rect x="649.40" y="668.72" width="11.02" height="11.02" fill="#d3d3d6"/><rect x="660.12" y="668.72" width="11.02" height="11.02" fill="#bebec3"/><rect x="670.84" y="668.72" width="11.02" height="11.02" fill="#d5d5d8"/><rect x="681.56" y="668.72" width="11.02" height="11.02" fill="#c8c8cd"/><rect x="692.28" y="668.72" width="11.02" height="11.02" fill="#d0d0d3"/><rect x="703.00" y="668.72" width="11.02" height="11.02" fill="#c5c5ca"/><rect x="713.72" y="668.72" width="11.02" height="11.02" fill="#e5e5e7"/><rect x="788.76" y="658.00" width="11.02" height="11.02" fill="#fcfcfc"/><rect x="820.92" y="658.00" width="11.02" height="11.02" fill="#fafafa"/><rect x="831.64" y="658.00" width="11.02" height="11.02" fill="#fafafa"/><rect x="842.36" y="658.00" width="11.02" height="11.02" fill="#fafafa"/><rect x="874.52" y="658.00" width="11.02" height="11.02" fill="#fafafa"/><rect x="885.24" y="658.00" width="11.02" height="11.02" fill="#fafafa"/><rect x="928.12" y="658.00" width="11.02" height="11.02" fill="#fafafa"/><rect x="949.56" y="658.00" width="11.02" height="11.02" fill="#fafafa"/><rect x="960.28" y="658.00" width="11.02" height="11.02" fill="#fafafa"/><rect x="788.76" y="668.72" width="11.02" height="11.02" fill="#efeff0"/><rect x="799.48" y="668.72" width="11.02" height="11.02" fill="#cacace"/><rect x="810.20" y="668.72" width="11.02" height="11.02" fill="#d0d0d3"/><rect x="820.92" y="668.72" width="11.02" height="11.02" fill="#c5c5ca"/><rect x="831.64" y="668.72" width="11.02" height="11.02" fill="#cacace"/><rect x="842.36" y="668.72" width="11.02" height="11.02" fill="#c0c0c5"/><rect x="853.08" y="668.72" width="11.02" height="11.02" fill="#d0d0d3"/><rect x="863.80" y="668.72" width="11.02" height="11.02" fill="#c8c8cd"/><rect x="874.52" y="668.72" width="11.02" height="11.02" fill="#c8c8cd"/><rect x="885.24" y="668.72" width="11.02" height="11.02" fill="#c8c8cd"/><rect x="895.96" y="668.72" width="11.02" height="11.02" fill="#d3d3d6"/><rect x="906.68" y="668.72" width="11.02" height="11.02" fill="#d0d0d3"/><rect x="917.40" y="668.72" width="11.02" height="11.02" fill="#c8c8cd"/><rect x="928.12" y="668.72" width="11.02" height="11.02" fill="#cacace"/><rect x="938.84" y="668.72" width="11.02" height="11.02" fill="#d0d0d3"/><rect x="949.56" y="668.72" width="11.02" height="11.02" fill="#b8b8bd"/><rect x="960.28" y="668.72" width="11.02" height="11.02" fill="#d3d3d6"/><rect x="971.00" y="668.72" width="11.02" height="11.02" fill="#bebec3"/><rect x="981.72" y="668.72" width="11.02" height="11.02" fill="#dadadd"/><rect x="992.44" y="668.72" width="11.02" height="11.02" fill="#cacace"/><rect x="1003.16" y="668.72" width="11.02" height="11.02" fill="#cacace"/><rect x="1013.88" y="668.72" width="11.02" height="11.02" fill="#f2f2f3"/><rect x="60.10" y="79.00" width="10.90" height="10.90" fill="#edeef3"/><rect x="70.70" y="79.00" width="10.90" height="10.90" fill="#f2f3f7"/><rect x="81.30" y="79.00" width="10.90" height="10.90" fill="#e4e5ea"/><rect x="91.90" y="79.00" width="10.90" height="10.90" fill="#f4f5f9"/><rect x="102.50" y="79.00" width="10.90" height="10.90" fill="#e7e8ed"/><rect x="113.10" y="79.00" width="10.90" height="10.90" fill="#ecedf1"/><rect x="123.70" y="79.00" width="10.90" height="10.90" fill="#f4f5f9"/><rect x="134.30" y="79.00" width="10.90" height="10.90" fill="#e8e9ee"/><rect x="144.90" y="79.00" width="10.90" height="10.90" fill="#f5f6fa"/><rect x="155.50" y="79.00" width="10.90" height="10.90" fill="#eaebf0"/><rect x="166.10" y="79.00" width="10.90" height="10.90" fill="#f4f5f9"/><rect x="176.70" y="79.00" width="10.90" height="10.90" fill="#f2f3f7"/><rect x="60.10" y="89.60" width="10.90" height="10.90" fill="#bbbbc3"/><rect x="70.70" y="89.60" width="10.90" height="10.90" fill="#b2b3bb"/><rect x="81.30" y="89.60" width="10.90" height="10.90" fill="#a7a8b1"/><rect x="91.90" y="89.60" width="10.90" height="10.90" fill="#babbc2"/><rect x="102.50" y="89.60" width="10.90" height="10.90" fill="#b7b8c0"/><rect x="113.10" y="89.60" width="10.90" height="10.90" fill="#adadb6"/><rect x="123.70" y="89.60" width="10.90" height="10.90" fill="#a4a5ae"/><rect x="134.30" y="89.60" width="10.90" height="10.90" fill="#aeaeb7"/><rect x="144.90" y="89.60" width="10.90" height="10.90" fill="#b3b3bc"/><rect x="155.50" y="89.60" width="10.90" height="10.90" fill="#a3a4ad"/><rect x="166.10" y="89.60" width="10.90" height="10.90" fill="#dddee3"/><rect x="60.10" y="100.20" width="10.90" height="10.90" fill="#f6f7fb"/><rect x="70.70" y="100.20" width="10.90" height="10.90" fill="#eff1f6"/><rect x="81.30" y="100.20" width="10.90" height="10.90" fill="#f4f5f9"/><rect x="91.90" y="100.20" width="10.90" height="10.90" fill="#f5f6fa"/><rect x="102.50" y="100.20" width="10.90" height="10.90" fill="#f5f6fa"/><rect x="113.10" y="100.20" width="10.90" height="10.90" fill="#f4f5f9"/><rect x="123.70" y="100.20" width="10.90" height="10.90" fill="#f0f1f7"/><rect x="134.30" y="100.20" width="10.90" height="10.90" fill="#f5f6fa"/><rect x="144.90" y="100.20" width="10.90" height="10.90" fill="#f2f3f8"/><rect x="155.50" y="100.20" width="10.90" height="10.90" fill="#f1f2f8"/><rect x="166.10" y="100.20" width="10.90" height="10.90" fill="#f3f4f9"/><rect x="176.70" y="100.20" width="10.90" height="10.90" fill="#f2f3f8"/><rect x="187.30" y="100.20" width="10.90" height="10.90" fill="#f6f7fb"/><rect x="197.90" y="100.20" width="10.90" height="10.90" fill="#f6f7fb"/><rect x="60.10" y="110.80" width="10.90" height="10.90" fill="#d8dbe6"/><rect x="70.70" y="110.80" width="10.90" height="10.90" fill="#d0d4e1"/><rect x="81.30" y="110.80" width="10.90" height="10.90" fill="#d4d8e4"/><rect x="91.90" y="110.80" width="10.90" height="10.90" fill="#d6d9e5"/><rect x="102.50" y="110.80" width="10.90" height="10.90" fill="#d2d5e2"/><rect x="113.10" y="110.80" width="10.90" height="10.90" fill="#d4d7e3"/><rect x="123.70" y="110.80" width="10.90" height="10.90" fill="#d6dae5"/><rect x="134.30" y="110.80" width="10.90" height="10.90" fill="#ced2e0"/><rect x="144.90" y="110.80" width="10.90" height="10.90" fill="#d0d4e1"/><rect x="155.50" y="110.80" width="10.90" height="10.90" fill="#d7dae6"/><rect x="166.10" y="110.80" width="10.90" height="10.90" fill="#d2d5e2"/><rect x="176.70" y="110.80" width="10.90" height="10.90" fill="#d3d6e3"/><rect x="187.30" y="110.80" width="10.90" height="10.90" fill="#cdd1df"/><rect x="197.90" y="110.80" width="10.90" height="10.90" fill="#cfd3e0"/><rect x="60.10" y="121.40" width="10.90" height="10.90" fill="#f4f5fa"/><rect x="70.70" y="121.40" width="10.90" height="10.90" fill="#f0f2f7"/><rect x="81.30" y="121.40" width="10.90" height="10.90" fill="#f5f6fb"/><rect x="91.90" y="121.40" width="10.90" height="10.90" fill="#f4f5f9"/><rect x="102.50" y="121.40" width="10.90" height="10.90" fill="#f2f3f8"/><rect x="113.10" y="121.40" width="10.90" height="10.90" fill="#f5f6fa"/><rect x="123.70" y="121.40" width="10.90" height="10.90" fill="#f3f4f9"/><rect x="134.30" y="121.40" width="10.90" height="10.90" fill="#f6f7fb"/><rect x="144.90" y="121.40" width="10.90" height="10.90" fill="#f2f3f8"/><rect x="155.50" y="121.40" width="10.90" height="10.90" fill="#f2f3f8"/><rect x="166.10" y="121.40" width="10.90" height="10.90" fill="#f3f4f9"/><rect x="176.70" y="121.40" width="10.90" height="10.90" fill="#f1f2f8"/><rect x="187.30" y="121.40" width="10.90" height="10.90" fill="#f4f5fa"/><rect x="197.90" y="121.40" width="10.90" height="10.90" fill="#f2f3f8"/></svg>

<!-- texts -->
<div id="logo"><span class="t" id="lg1" style="left:23.50px;top:18.02px;font-size:26px;font-weight:700;color:#ffffff;letter-spacing:-0.397px;">SH</span><span class="t" id="lg1o" style="left:60.09px;top:18.02px;font-size:26px;font-weight:700;color:#ffffff;letter-spacing:1.386px;">O</span><span class="t" id="lg1p" style="left:79.92px;top:18.02px;font-size:26px;font-weight:700;color:#ffffff;letter-spacing:-0.017px;transform:scaleX(1.04);transform-origin:0 0;">P</span><span class="t" id="lg2" style="left:96.36px;top:18.02px;font-size:26px;font-weight:400;color:#ffffff;letter-spacing:0.359px;-webkit-text-stroke:0.55px #02142b;transform:scaleX(0.84);transform-origin:0 0;">LINE</span> <span class="t" id="lg3" style="left:149.89px;top:18.02px;font-size:26px;font-weight:700;color:#ffffff;letter-spacing:0.331px;">Enterprise</span></div>
<span class="t" id="sec1" style="left:19.66px;top:160.77px;font-size:13.5px;font-weight:400;color:#5b6482;letter-spacing:0.438px;-webkit-text-stroke:0.2px #5b6482;">Organization</span>
<span class="t" id="nav1" style="left:46.45px;top:194.72px;font-size:14.6px;font-weight:400;color:#1d2230;letter-spacing:0.363px;-webkit-text-stroke:0.36px #1d2230;">Bill management</span>
<span class="t" id="nav2" style="left:46.81px;top:230.72px;font-size:14.6px;font-weight:400;color:#1d2230;letter-spacing:0.464px;-webkit-text-stroke:0.36px #1d2230;">Staff management</span>
<span class="t" id="nav3" style="left:46.45px;top:266.72px;font-size:14.6px;font-weight:400;color:#1d2230;letter-spacing:0.370px;-webkit-text-stroke:0.36px #1d2230;">Data management</span>
<span class="t" id="nav4" style="left:46.76px;top:302.72px;font-size:14.6px;font-weight:400;color:#1d2230;letter-spacing:0.702px;-webkit-text-stroke:0.36px #1d2230;">Activity log</span>
<span class="t" id="sec2" style="left:19.61px;top:346.77px;font-size:13.5px;font-weight:400;color:#5b6482;letter-spacing:0.420px;-webkit-text-stroke:0.2px #5b6482;">Store operation</span>
<span class="t" id="nav5" style="left:46.81px;top:380.72px;font-size:14.6px;font-weight:400;color:#2f5fe3;letter-spacing:0.383px;-webkit-text-stroke:0.36px #2f5fe3;">Store management</span>
<span class="t" id="title" style="left:347.07px;top:90.62px;font-size:22.8px;font-weight:400;color:#14171f;letter-spacing:0.428px;-webkit-text-stroke:0.6px #14171f;">Store management</span>
<span class="t" id="dup" style="left:1337.07px;top:94.72px;font-size:14.6px;font-weight:400;color:#1d2230;letter-spacing:0.530px;-webkit-text-stroke:0.33px #1d2230;">Duplicate store</span>
<span class="t" id="create" style="left:1482.65px;top:94.72px;font-size:14.6px;font-weight:400;color:#ffffff;letter-spacing:0.393px;-webkit-text-stroke:0.33px #ffffff;">Create store(5/10)</span>
<span class="t" id="ph" style="left:420.97px;top:179.87px;font-size:15.3px;font-weight:400;color:#b4b8c6;letter-spacing:0.704px;">Search store name/handle/main domain</span>
<span class="t" id="fstatus" style="left:1006.38px;top:180.72px;font-size:14.6px;font-weight:400;color:#1d2230;letter-spacing:0.425px;-webkit-text-stroke:0.33px #1d2230;">Store status</span>
<span class="t" id="fsort" style="left:1496.36px;top:180.72px;font-size:14.6px;font-weight:400;color:#1d2230;letter-spacing:0.351px;-webkit-text-stroke:0.33px #1d2230;">Sort by</span>
<span class="t" id="tag" style="left:391.98px;top:225.72px;font-size:14.6px;font-weight:400;color:#3e4964;letter-spacing:0.334px;">Store status: Open, Closed, Deactivated, Frozen</span>
<span class="t" id="h1" style="left:379.17px;top:275.72px;font-size:14.6px;font-weight:400;color:#1d2230;letter-spacing:0.330px;-webkit-text-stroke:0.36px #1d2230;">Store name</span>
<span class="t" id="h2" style="left:616.82px;top:275.72px;font-size:14.6px;font-weight:400;color:#1d2230;letter-spacing:0.533px;-webkit-text-stroke:0.36px #1d2230;">handle</span>
<span class="t" id="h3" style="left:798.17px;top:275.72px;font-size:14.6px;font-weight:400;color:#1d2230;letter-spacing:0.499px;-webkit-text-stroke:0.36px #1d2230;">Store's main domain</span>
<span class="t" id="h4" style="left:1058.84px;top:275.72px;font-size:14.6px;font-weight:400;color:#1d2230;letter-spacing:0.400px;-webkit-text-stroke:0.36px #1d2230;">Store status</span>
<span class="t" id="h5" style="left:1226.81px;top:275.72px;font-size:14.6px;font-weight:400;color:#1d2230;letter-spacing:0.360px;-webkit-text-stroke:0.36px #1d2230;">Store plan</span>
<span class="t" id="h6" style="left:1453.47px;top:275.72px;font-size:14.6px;font-weight:400;color:#1d2230;letter-spacing:0.665px;-webkit-text-stroke:0.36px #1d2230;">Action</span>
<span class="t" id="open0" style="left:1077.49px;top:339.77px;font-size:13.5px;font-weight:400;color:#2f5847;letter-spacing:0.414px;-webkit-text-stroke:0.1px #2f5847;">Open</span>
<span class="t" id="plan0" style="left:1226.04px;top:328.62px;font-size:14.8px;font-weight:400;color:#404658;letter-spacing:0.761px;">Enterprise (Paid)</span>
<span class="t" id="days0" style="left:1227.08px;top:353.77px;font-size:13.5px;font-weight:400;color:#6b7391;letter-spacing:0.312px;">475 day left</span>
<span class="t" id="go0" style="left:1466.18px;top:339.72px;font-size:14.6px;font-weight:400;color:#1d2230;letter-spacing:0.428px;-webkit-text-stroke:0.26px #1d2230;">Go to admin</span>
<span class="t" id="open1" style="left:1077.49px;top:420.77px;font-size:13.5px;font-weight:400;color:#2f5847;letter-spacing:0.414px;-webkit-text-stroke:0.1px #2f5847;">Open</span>
<span class="t" id="plan1" style="left:1226.04px;top:410.62px;font-size:14.8px;font-weight:400;color:#404658;letter-spacing:0.761px;">Enterprise (Paid)</span>
<span class="t" id="days1" style="left:1227.08px;top:434.77px;font-size:13.5px;font-weight:400;color:#6b7391;letter-spacing:0.312px;">475 day left</span>
<span class="t" id="go1" style="left:1466.18px;top:421.72px;font-size:14.6px;font-weight:400;color:#1d2230;letter-spacing:0.428px;-webkit-text-stroke:0.26px #1d2230;">Go to admin</span>
<span class="t" id="open2" style="left:1077.49px;top:502.77px;font-size:13.5px;font-weight:400;color:#2f5847;letter-spacing:0.414px;-webkit-text-stroke:0.1px #2f5847;">Open</span>
<span class="t" id="plan2" style="left:1226.04px;top:491.62px;font-size:14.8px;font-weight:400;color:#404658;letter-spacing:0.761px;">Enterprise (Paid)</span>
<span class="t" id="days2" style="left:1227.08px;top:516.77px;font-size:13.5px;font-weight:400;color:#6b7391;letter-spacing:0.312px;">475 day left</span>
<span class="t" id="go2" style="left:1466.18px;top:502.72px;font-size:14.6px;font-weight:400;color:#1d2230;letter-spacing:0.428px;-webkit-text-stroke:0.26px #1d2230;">Go to admin</span>
<span class="t" id="open3" style="left:1077.49px;top:583.77px;font-size:13.5px;font-weight:400;color:#2f5847;letter-spacing:0.414px;-webkit-text-stroke:0.1px #2f5847;">Open</span>
<span class="t" id="plan3" style="left:1226.04px;top:573.62px;font-size:14.8px;font-weight:400;color:#404658;letter-spacing:0.761px;">Enterprise (Paid)</span>
<span class="t" id="days3" style="left:1227.08px;top:597.77px;font-size:13.5px;font-weight:400;color:#6b7391;letter-spacing:0.312px;">475 day left</span>
<span class="t" id="go3" style="left:1466.18px;top:583.72px;font-size:14.6px;font-weight:400;color:#1d2230;letter-spacing:0.428px;-webkit-text-stroke:0.26px #1d2230;">Go to admin</span>
<span class="t" id="open4" style="left:1077.49px;top:664.77px;font-size:13.5px;font-weight:400;color:#2f5847;letter-spacing:0.414px;-webkit-text-stroke:0.1px #2f5847;">Open</span>
<span class="t" id="plan4" style="left:1226.04px;top:654.62px;font-size:14.8px;font-weight:400;color:#404658;letter-spacing:0.761px;">Enterprise (Paid)</span>
<span class="t" id="days4" style="left:1227.08px;top:678.77px;font-size:13.5px;font-weight:400;color:#6b7391;letter-spacing:0.312px;">475 day left</span>
<span class="t" id="go4" style="left:1466.18px;top:665.72px;font-size:14.6px;font-weight:400;color:#1d2230;letter-spacing:0.428px;-webkit-text-stroke:0.26px #1d2230;">Go to admin</span>
<span class="t" id="pg1" style="left:1535.88px;top:736.72px;font-size:15.6px;font-weight:400;color:#2a55c8;letter-spacing:-0.316px;-webkit-text-stroke:0.2px #2a55c8;">1</span>
<span class="t" id="orgb" style="left:30.48px;top:95.27px;font-size:17.5px;font-weight:400;color:#f08a24;letter-spacing:0.966px;-webkit-text-stroke:0.5px #f08a24;">b</span>

<!-- logo O disc -->
<svg id="logoO" style="left:59px;top:19px" width="22" height="22" viewBox="59 19 22 22"><circle cx="69.850" cy="30.200" r="9.750" fill="#fff"/><path d="M65.300 27.100q-.3-.7.400-1l3.500-1.300q.7-.2 1.300.1l7.300 3.700a8.600 8.600 0 0 1-4.700 9.300l-4.800.1q-.7 0-.9-.7z" fill="#02142b"/><path d="M67.200 33.500l6.500 1.800-1 2.400-4.500.2z" fill="#5a6678"/><circle cx="68.700" cy="28.500" r="1.250" fill="#fff"/></svg>
<!-- arrow overlay -->
<svg id="arrow" style="left:0;top:0" width="1700" height="830" viewBox="0 0 1700 830">
<defs><linearGradient id="ag" gradientUnits="userSpaceOnUse" x1="278" y1="190" x2="530" y2="215"><stop offset="0" stop-color="#2d62fd"/><stop offset="0.3" stop-color="#557ffb"/><stop offset="0.650" stop-color="#8aa9fb"/><stop offset="1" stop-color="#b9cefc"/></linearGradient></defs>
<path d="M278 202.600L340 142.500V182.600H530V222.600H340V263z" fill="url(#ag)"/>
</svg>
</body>
</html>
